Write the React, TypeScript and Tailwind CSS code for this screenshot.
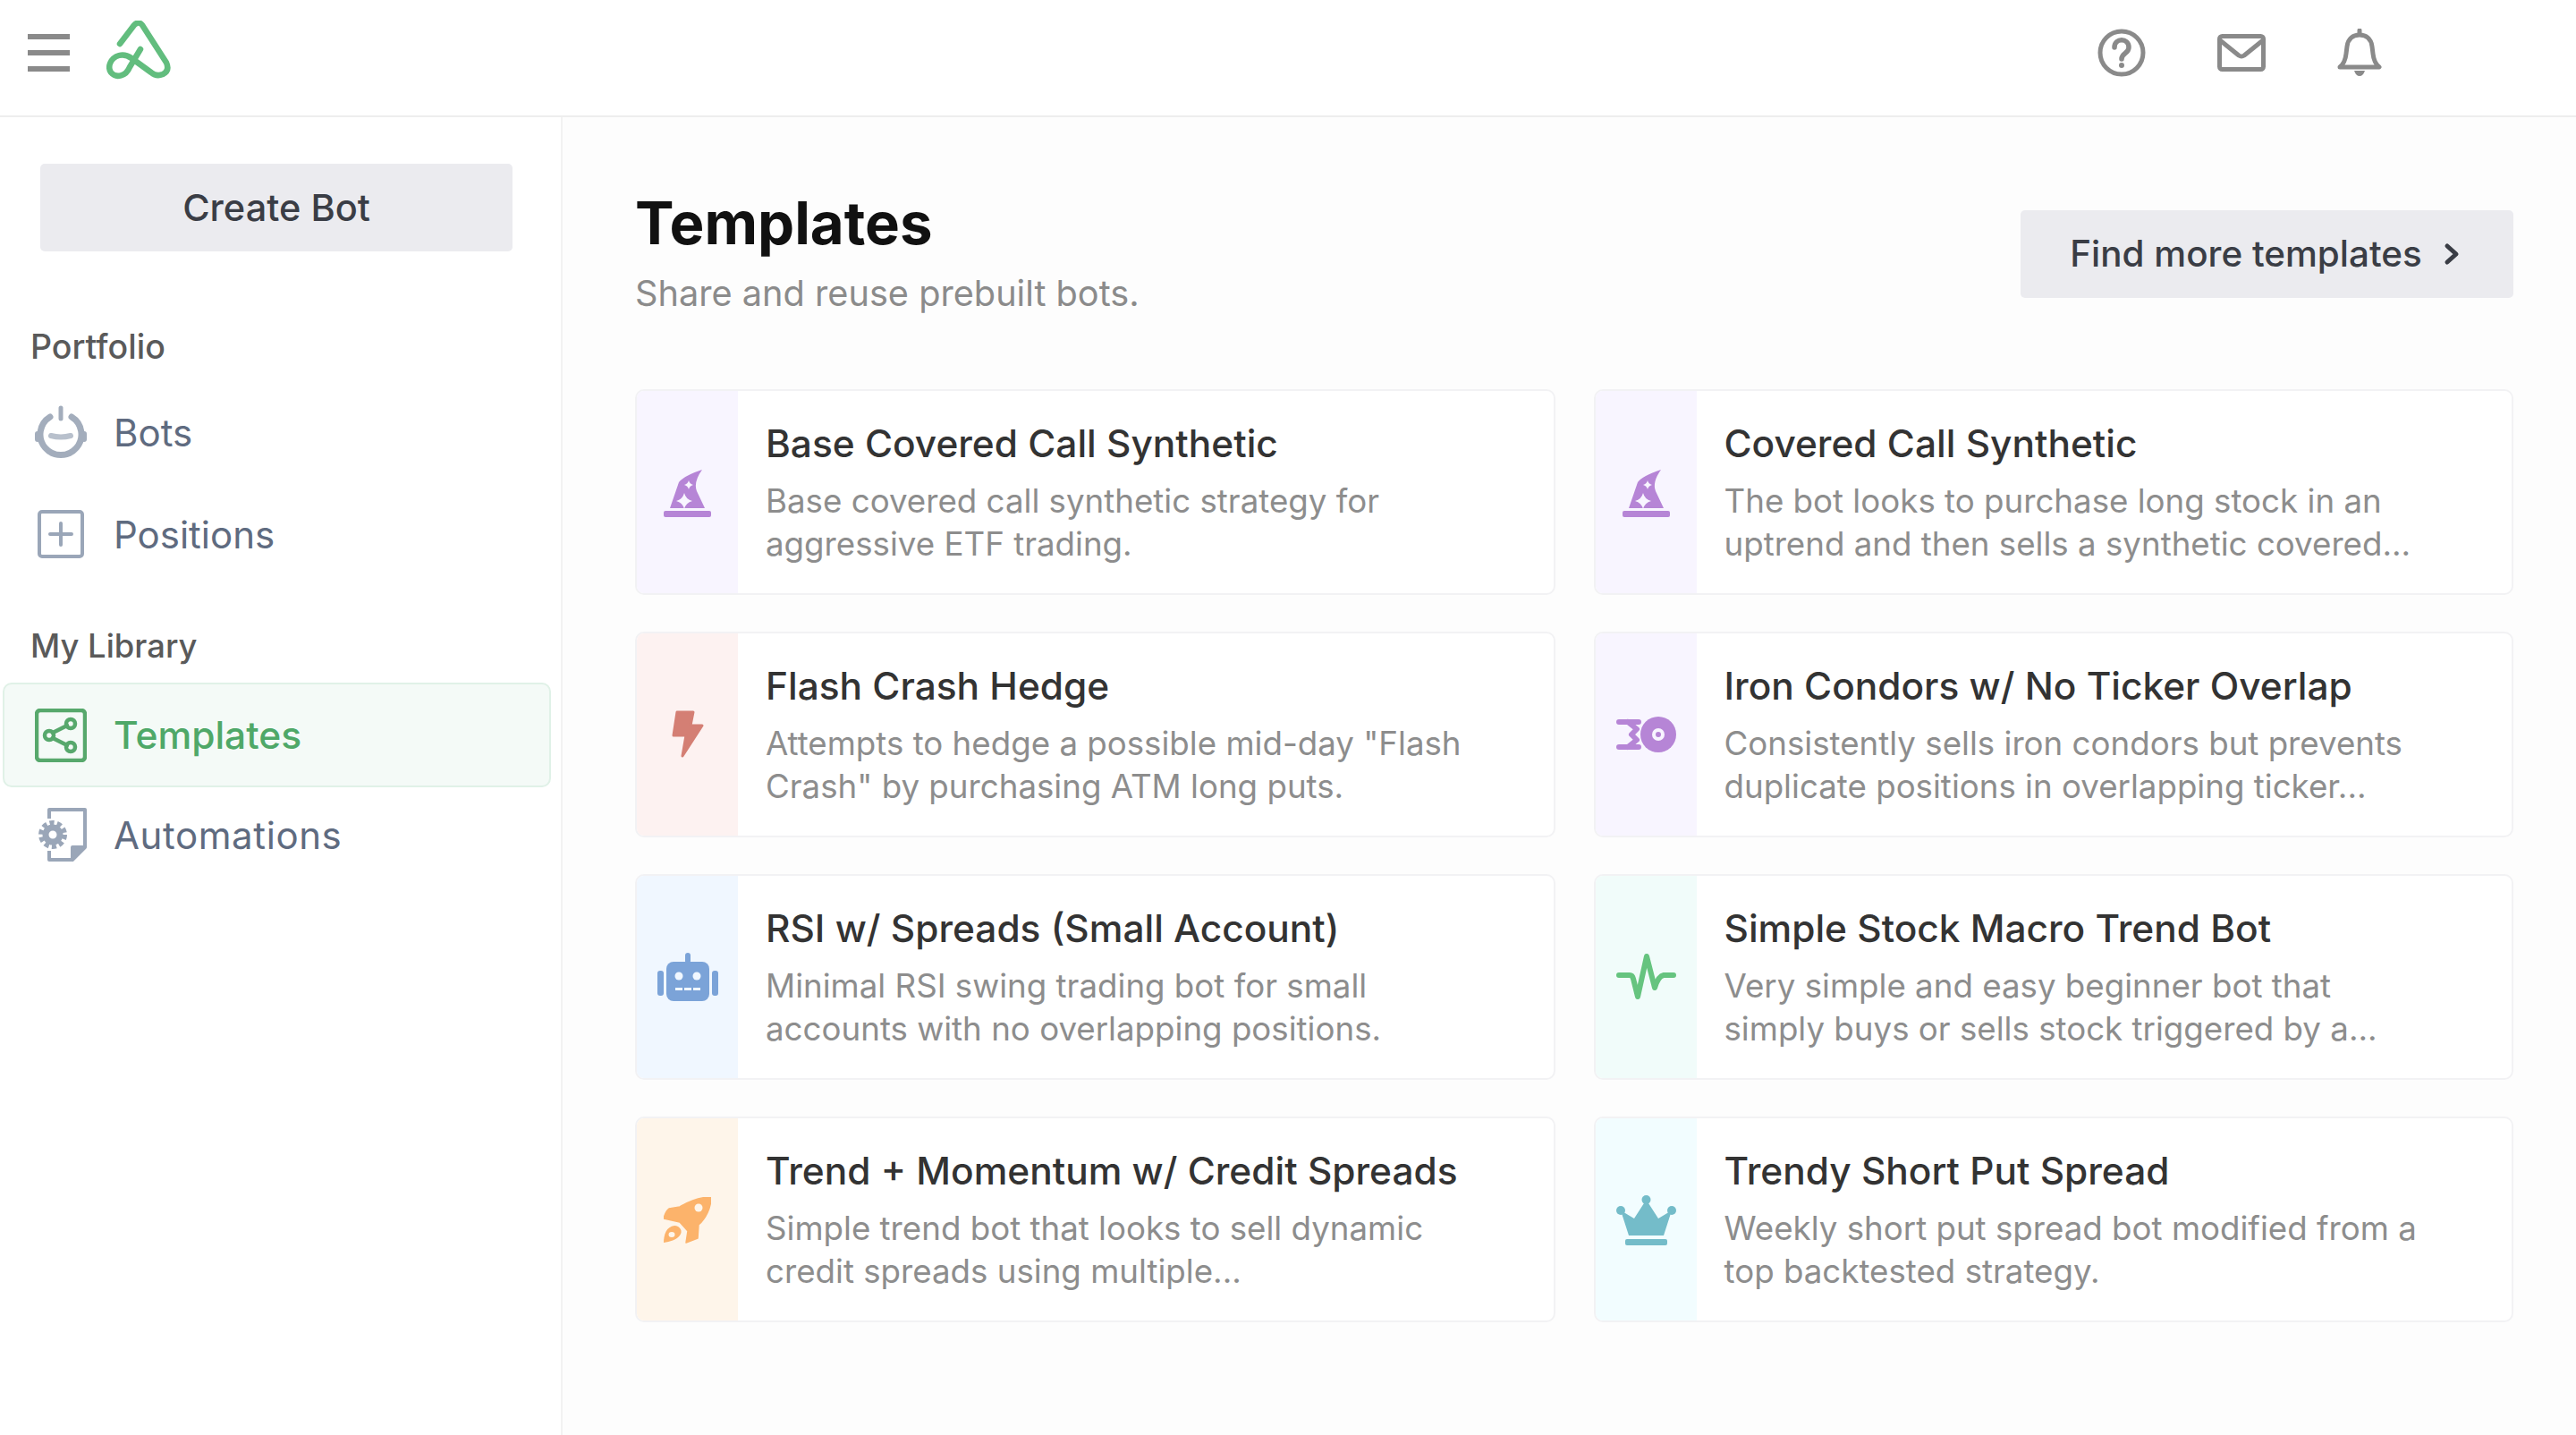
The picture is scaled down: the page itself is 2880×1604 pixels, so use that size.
import React from "react";

const ink = "#8a8a8a";

function Logo() {
  return (
    <svg width="72" height="66" viewBox="0 0 72 66" fill="none" stroke="#62bd7e" strokeWidth="6.5" strokeLinecap="round" strokeLinejoin="round">
      <path d="M15 26 L31 5 Q36 0 40 5 L67 47 Q71 56 63 60 Q56 63 50 58 L28 42 Q21 37 14 39 C4 42 1 52 5 58 C11 65 22 62 26 52 L38 32" />
    </svg>
  );
}

function Hat({ c, bg }: { c: string; bg: string }) {
  const star = (x: number, y: number, r: number) =>
    `M${x} ${y - r} Q${x + r * 0.2} ${y - r * 0.2} ${x + r} ${y} Q${x + r * 0.2} ${y + r * 0.2} ${x} ${y + r} Q${x - r * 0.2} ${y + r * 0.2} ${x - r} ${y} Q${x - r * 0.2} ${y - r * 0.2} ${x} ${y - r}Z`;
  return (
    <svg width="53" height="54" viewBox="0 0 53 54" className="mt-[3px]">
      <rect x="0" y="46" width="53" height="7" rx="2" fill={c} />
      <path d="M7 43 L17 14 Q22 7 43 0 Q33 14 37 24 L46 43 Z" fill={c} />
      <path d={star(28, 17, 5)} fill={bg} />
      <path d={star(23, 35, 9)} fill={bg} />
    </svg>
  );
}

function Flash({ c }: { c: string }) {
  return (
    <svg width="36" height="54" viewBox="0 0 36 54">
      <path d="M6 2 H24 L21 17 H34 L12 51 L16 28 H2 Z" fill={c} stroke={c} strokeWidth="3" strokeLinejoin="round" />
    </svg>
  );
}

function Condor({ c, bg }: { c: string; bg: string }) {
  return (
    <svg width="67" height="42" viewBox="0 0 67 42">
      <path d="M3 7 H25 M3 35 H25 M13 7 L23 15 L17 21 L23 27 L13 35" fill="none" stroke={c} strokeWidth="6" strokeLinecap="round" strokeLinejoin="round" />
      <circle cx="47" cy="21" r="20" fill={c} />
      <circle cx="47" cy="21" r="7" fill={bg} />
      <circle cx="47" cy="21" r="3" fill={c} />
    </svg>
  );
}

function Robot({ c, bg }: { c: string; bg: string }) {
  return (
    <svg width="68" height="54" viewBox="0 0 68 54">
      <rect x="31" y="0" width="6" height="12" rx="3" fill={c} />
      <rect x="10" y="10" width="48" height="44" rx="8" fill={c} />
      <rect x="0" y="20" width="7" height="28" rx="3" fill={c} />
      <rect x="61" y="20" width="7" height="28" rx="3" fill={c} />
      <circle cx="24" cy="26" r="4.5" fill={bg} />
      <circle cx="44" cy="26" r="4.5" fill={bg} />
      <rect x="20" y="39" width="8" height="3" fill={bg} />
      <rect x="30" y="39" width="8" height="3" fill={bg} />
      <rect x="40" y="39" width="8" height="3" fill={bg} />
    </svg>
  );
}

function Pulse({ c }: { c: string }) {
  return (
    <svg width="67" height="54" viewBox="0 0 67 54" fill="none" stroke={c} strokeWidth="6" strokeLinecap="round" strokeLinejoin="round">
      <path d="M3 25 H15 Q18 25 19 29 L24 49 L34 4 L43 39 Q47 26 53 25 H64" />
    </svg>
  );
}

function Rocket({ c, bg }: { c: string; bg: string }) {
  return (
    <svg width="53" height="54" viewBox="0 0 53 54" className="mt-[3px]">
      <path d="M53 0 C42 0 28 5 18 11 L6 13 Q2 16 0 24 L18 28 L27 38 L25 51 L38 46 L39 31 C47 24 53 12 53 0Z" fill={c} stroke={c} strokeWidth="1.5" strokeLinejoin="round" />
      <circle cx="39" cy="12" r="4.5" fill={bg} />
      <path d="M0 51 C0 42 3 33 12 32 C18 32 22 38 18 43 C14 48 7 50 0 51Z" fill={c} />
      <ellipse cx="9" cy="42" rx="3.5" ry="3" fill={bg} />
    </svg>
  );
}

function Crown({ c }: { c: string }) {
  return (
    <svg width="67" height="57" viewBox="0 0 67 57" className="mt-[2px]">
      <circle cx="33.5" cy="5" r="5" fill={c} />
      <circle cx="5" cy="17" r="5" fill={c} />
      <circle cx="62" cy="17" r="5" fill={c} />
      <path d="M5 17 L20 26 L33.5 5 L47 26 L62 17 L53 45 H14 Z" fill={c} />
      <rect x="10" y="49" width="47" height="7" rx="2" fill={c} />
    </svg>
  );
}

const cards = [
  { t: "Base Covered Call Synthetic", d: ["Base covered call synthetic strategy for", "aggressive ETF trading."], bg: "bg-[#f8f5ff]", kind: "hat", c: "#b685d6", hex: "#f8f5ff" },
  { t: "Covered Call Synthetic", d: ["The bot looks to purchase long stock in an", "uptrend and then sells a synthetic covered..."], bg: "bg-[#f8f5ff]", kind: "hat", c: "#b685d6", hex: "#f8f5ff" },
  { t: "Flash Crash Hedge", d: ['Attempts to hedge a possible mid-day "Flash', 'Crash" by purchasing ATM long puts.'], bg: "bg-[#fdf2f1]", kind: "flash", c: "#d47f74", hex: "#fdf2f1" },
  { t: "Iron Condors w/ No Ticker Overlap", d: ["Consistently sells iron condors but prevents", "duplicate positions in overlapping ticker..."], bg: "bg-[#f8f5ff]", kind: "condor", c: "#b685d6", hex: "#f8f5ff" },
  { t: "RSI w/ Spreads (Small Account)", d: ["Minimal RSI swing trading bot for small", "accounts with no overlapping positions."], bg: "bg-[#f0f7ff]", kind: "robot", c: "#7ba3d8", hex: "#f0f7ff" },
  { t: "Simple Stock Macro Trend Bot", d: ["Very simple and easy beginner bot that", "simply buys or sells stock triggered by a..."], bg: "bg-[#f1fcfa]", kind: "pulse", c: "#66c47f", hex: "#f1fcfa" },
  { t: "Trend + Momentum w/ Credit Spreads", d: ["Simple trend bot that looks to sell dynamic", "credit spreads using multiple..."], bg: "bg-[#fef5ea]", kind: "rocket", c: "#fcb36b", hex: "#fef5ea" },
  { t: "Trendy Short Put Spread", d: ["Weekly short put spread bot modified from a", "top backtested strategy."], bg: "bg-[#f2fdff]", kind: "crown", c: "#74bcc9", hex: "#f2fdff" },
];

function CardIcon({ kind, c, hex }: { kind: string; c: string; hex: string }) {
  if (kind === "hat") return <Hat c={c} bg={hex} />;
  if (kind === "flash") return <Flash c={c} />;
  if (kind === "condor") return <Condor c={c} bg={hex} />;
  if (kind === "robot") return <Robot c={c} bg={hex} />;
  if (kind === "pulse") return <Pulse c={c} />;
  if (kind === "rocket") return <Rocket c={c} bg={hex} />;
  return <Crown c={c} />;
}

export default function App() {
  return (
    <div className="w-[2880px] h-[1604px] bg-white overflow-hidden font-['Inter',sans-serif]">
      <header className="h-[131px] border-b-2 border-[#eeeeee] flex items-center relative">
        <div className="ml-[31px] -mt-[11px] flex flex-col gap-[12px] w-[47px]">
          <div className="h-[6px] bg-[#8a8a8a]" />
          <div className="h-[6px] bg-[#8a8a8a]" />
          <div className="h-[6px] bg-[#8a8a8a]" />
        </div>
        <div className="ml-[41px] -mt-[17px]">
          <Logo />
        </div>
        <div className="ml-auto mr-[217px] flex items-center gap-[80px] -mt-[11px]">
          <svg width="54" height="54" viewBox="0 0 54 54" fill="none" stroke={ink} strokeWidth="5" strokeLinecap="round">
            <circle cx="27" cy="27" r="24" />
            <path d="M19 21 C19 10 35 10 35 21 C35 28 27 27 27 34" strokeWidth="5.5" />
            <circle cx="27" cy="41" r="3" fill={ink} stroke="none" />
          </svg>
          <svg width="54" height="42" viewBox="0 0 54 42" fill="none" stroke={ink} strokeWidth="5" strokeLinejoin="round" strokeLinecap="round">
            <rect x="2.5" y="2.5" width="49" height="37" rx="3" />
            <path d="M3 7 L24 24 Q27 26 30 24 L51 7" />
          </svg>
          <svg width="50" height="54" viewBox="0 0 50 54" fill="none" stroke={ink} strokeWidth="5" strokeLinejoin="round" strokeLinecap="round">
            <path d="M3 43 Q9 38 10 28 L11 20 C12 11 18 7 25 7 C32 7 38 11 39 20 L40 28 Q41 38 47 43 Z" />
            <path d="M25 2 V6" />
            <path d="M19 47 H31 Q29 53 25 53 Q21 53 19 47 Z" fill={ink} stroke="none" />
          </svg>
        </div>
      </header>
      <div className="flex h-[1473px]">
        <aside className="w-[629px] shrink-0 border-r-2 border-[#f2f2f2] pt-[52px] text-[#5f6b80]">
          <button className="ml-[45px] w-[528px] h-[98px] rounded-[5px] bg-[#ebebef] text-[#3a3d45] text-[41.5px] font-medium flex items-center justify-center">
            Create Bot
          </button>
          <div className="ml-[34px] mt-[87px] h-[40px] leading-[40px] text-[37.5px] font-medium text-[#5a5a5a]">Portfolio</div>
          <div className="mt-[18px] h-[114px] flex items-center text-[42px] pl-[39px]">
            <svg width="58" height="60" viewBox="0 0 58 60" fill="none" stroke="#a3adbc" strokeWidth="7" strokeLinecap="round">
              <path d="M17 13 A23 23 0 1 0 41 13" />
              <path d="M29 3 V15" strokeWidth="5" />
              <path d="M18 34 Q29 37 40 34" strokeWidth="6" stroke="#b8c0cc" />
              <path d="M3 32 V38 M55 32 V38" strokeWidth="6" />
            </svg>
            <span className="ml-[30px]">Bots</span>
          </div>
          <div className="h-[114px] flex items-center text-[42px] pl-[42px]">
            <svg width="52" height="54" viewBox="0 0 52 54" fill="none" stroke="#9aa6b8" strokeWidth="4" strokeLinecap="round">
              <rect x="2" y="2" width="48" height="50" rx="3" />
              <path d="M26 15 V39 M14 27 H38" />
            </svg>
            <span className="ml-[33px]">Positions</span>
          </div>
          <div className="ml-[34px] mt-[48px] h-[40px] leading-[40px] text-[36.4px] font-medium text-[#5a5a5a]">My Library</div>
          <div className="mt-[21px] ml-[3px] w-[613px] h-[117px] rounded-[10px] bg-[#f4faf7] border-2 border-[#e0f1e7] flex items-center pl-[34px] text-[42.5px] font-medium text-[#4fa868]">
            <svg width="58" height="60" viewBox="0 0 58 60" fill="none" stroke="#57a86c" strokeWidth="4.5" strokeLinecap="round">
              <rect x="2" y="2" width="54" height="56" rx="4" />
              <circle cx="40" cy="17" r="5" />
              <circle cx="16" cy="30" r="5" />
              <circle cx="40" cy="43" r="5" />
              <path d="M20 27 L36 19 M20 33 L36 41" />
            </svg>
            <span className="ml-[30px]">Templates</span>
          </div>
          <div className="h-[106px] flex items-center text-[42px] tracking-[0.6px] pl-[43px]">
            <svg width="54" height="60" viewBox="0 0 54 60" fill="none" stroke="#9aa6b8" strokeWidth="4" strokeLinejoin="round">
              <path d="M12 12 V2 H52 V44 L38 58 H12 V48" />
              <path d="M38 58 V44 H52" fill="#9aa6b8" />
              <circle cx="16" cy="30" r="13" strokeWidth="6" strokeDasharray="5 3.2" />
              <circle cx="16" cy="30" r="8" strokeWidth="7" />
            </svg>
            <span className="ml-[30px]">Automations</span>
          </div>
        </aside>
        <main className="flex-1 bg-[#fdfdfd] pl-[81px] pr-[70px] pt-[83px]">
          <div className="flex justify-between items-start">
            <div>
              <h1 className="h-[72px] leading-[72px] text-[65.3px] font-bold text-[#111111]">Templates</h1>
              <p className="mt-[18px] h-[48px] leading-[48px] text-[39.7px] text-[#8b8b8b]">Share and reuse prebuilt bots.</p>
            </div>
            <button className="mt-[21px] w-[551px] h-[98px] rounded-[5px] bg-[#ebebef] text-[#3a3d45] text-[40.4px] font-medium flex items-center justify-center gap-[24px] pr-[5px]">
              Find more templates
              <svg width="18" height="26" viewBox="0 0 18 26" fill="none" stroke="#3a3d45" strokeWidth="5" strokeLinecap="round" strokeLinejoin="round">
                <path d="M4 4 L14 13 L4 22" />
              </svg>
            </button>
          </div>
          <div className="mt-[83px] grid grid-cols-2 gap-x-[43px] gap-y-[41px]">
            {cards.map((x) => (
              <div key={x.t} className="h-[230px] rounded-[10px] border-2 border-[#f2f2f4] bg-white flex overflow-hidden">
                <div className={`w-[113px] shrink-0 flex items-center justify-center ${x.bg}`}>
                  <CardIcon kind={x.kind} c={x.c} hex={x.hex} />
                </div>
                <div className="pl-[31px] pt-[31px] whitespace-nowrap">
                  <div className="h-[56px] leading-[56px] text-[42.4px] font-medium text-[#333333]">{x.t}</div>
                  <div className="mt-[12px] text-[36.7px] leading-[48px] text-[#8d8d8d]">
                    {x.d.map((l) => (
                      <div key={l}>{l}</div>
                    ))}
                  </div>
                </div>
              </div>
            ))}
          </div>
        </main>
      </div>
    </div>
  );
}
